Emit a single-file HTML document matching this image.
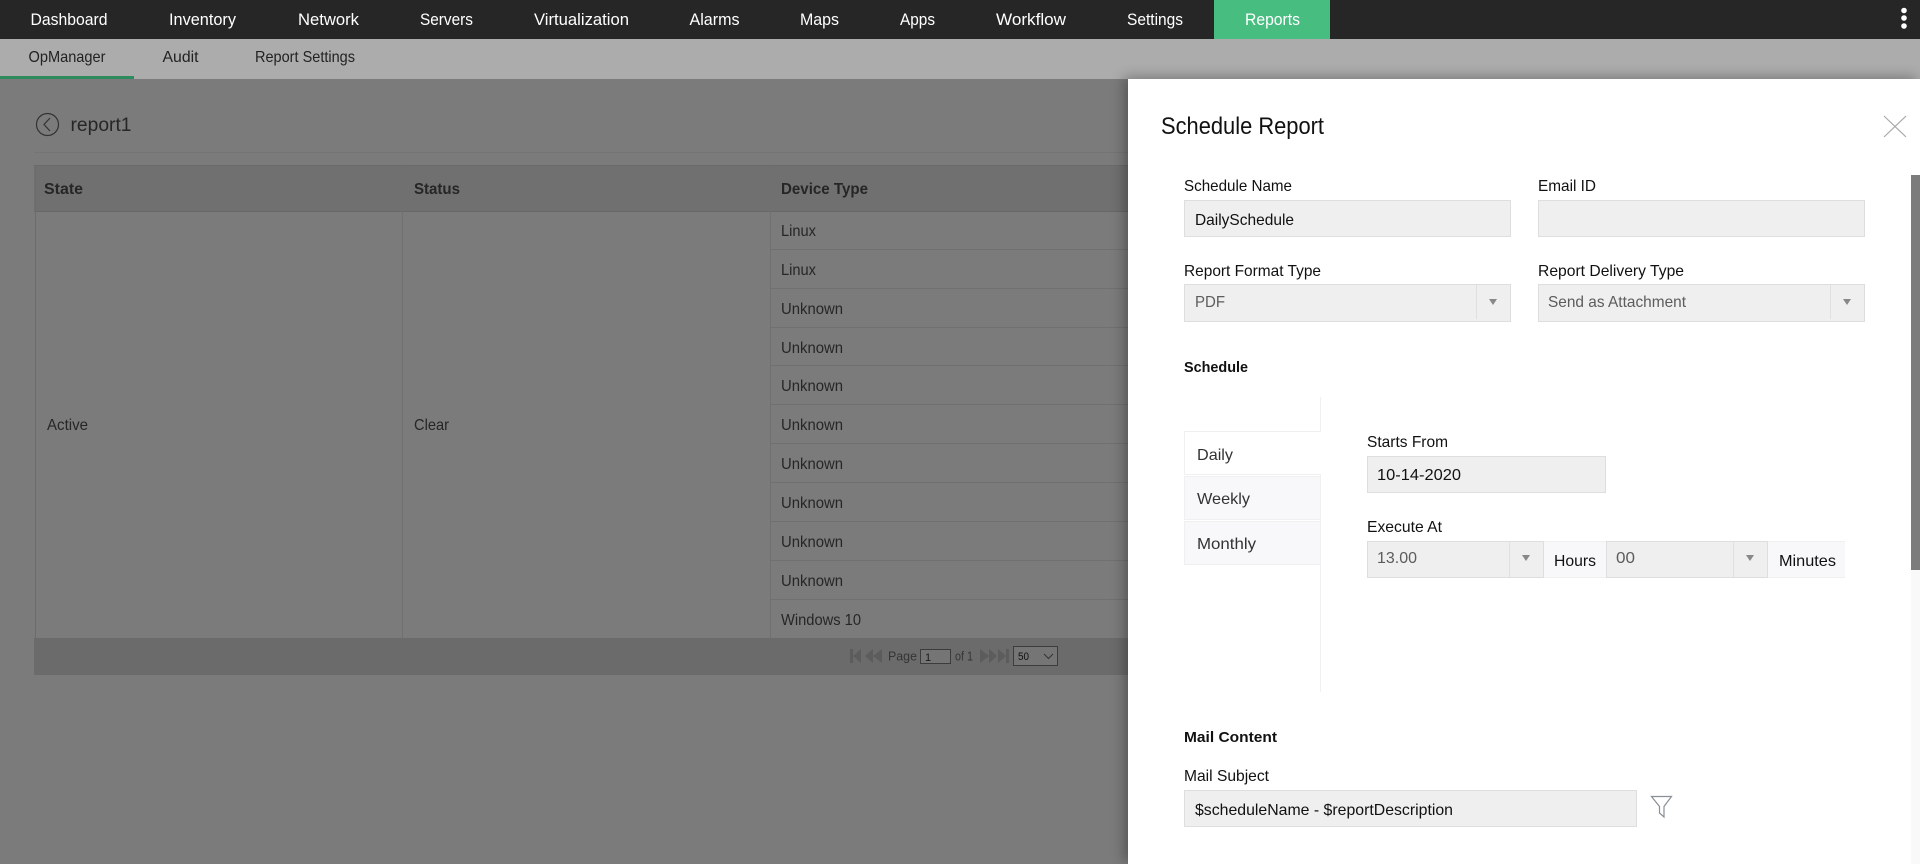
<!DOCTYPE html>
<html lang="en"><head><meta charset="utf-8"><title>Schedule Report</title>
<style>
html,body{margin:0;padding:0;width:1920px;height:864px;overflow:hidden;background:#7b7b7b;font-family:"Liberation Sans",sans-serif}
div{position:absolute;box-sizing:border-box}
.in{background:#efefef;border:1px solid #dedede}
.dv{width:1px;background:#e0e0e0}
.ln{background:#707070;height:1px}
.vl{background:#707070;width:1px}
svg{position:absolute;left:0;top:0}
text{font-family:"Liberation Sans",sans-serif;font-size:16px;fill:#111}
.n text{fill:#fff;font-size:16.5px}
.s text{fill:#222;font-size:16px}
.t text{fill:#262626;font-size:16px}
.b{font-weight:700}
.g{fill:#5c5c5c}
</style></head><body>
<div style="left:0;top:0;width:1920px;height:39px;background:#262626"></div>
<div style="left:1214px;top:0;width:116px;height:39px;background:#48bd80"></div>
<div style="left:0;top:39px;width:1920px;height:40px;background:#acacac"></div>
<div style="left:0;top:76px;width:134px;height:3px;background:#2e8b5e"></div>
<div style="left:34px;top:152px;width:1094px;height:1px;background:#747474"></div>
<div style="left:34px;top:165px;width:1094px;height:47px;background:#707070;border-top:1px solid #6a6a6a;border-bottom:1px solid #676767"></div>
<div class="vl" style="left:35px;top:165px;height:473px;background:#6c6c6c"></div>
<div class="vl" style="left:402px;top:165px;height:473px"></div>
<div class="vl" style="left:770px;top:165px;height:473px"></div>
<div class="ln" style="left:770px;top:249px;width:358px"></div>
<div class="ln" style="left:770px;top:288px;width:358px"></div>
<div class="ln" style="left:770px;top:327px;width:358px"></div>
<div class="ln" style="left:770px;top:365px;width:358px"></div>
<div class="ln" style="left:770px;top:404px;width:358px"></div>
<div class="ln" style="left:770px;top:443px;width:358px"></div>
<div class="ln" style="left:770px;top:482px;width:358px"></div>
<div class="ln" style="left:770px;top:521px;width:358px"></div>
<div class="ln" style="left:770px;top:560px;width:358px"></div>
<div class="ln" style="left:770px;top:599px;width:358px"></div>
<div style="left:34px;top:638px;width:1094px;height:37px;background:#6b6b6b"></div>
<div style="left:920px;top:649px;width:31px;height:15px;background:#757575;border:1px solid #3c3c3c"></div>
<div style="left:1013px;top:646px;width:45px;height:20px;background:#757575;border:1px solid #3c3c3c"></div>

<div style="left:1128px;top:79px;width:792px;height:785px;background:#fff;box-shadow:-4px -2px 12px rgba(0,0,0,.3)"></div>
<div style="left:1911px;top:175px;width:9px;height:689px;background:#f9f9f9"></div>
<div style="left:1911px;top:175px;width:9px;height:395px;background:#7c7c7c"></div>

<div class="in" style="left:1184px;top:200px;width:327px;height:37px"></div>
<div class="in" style="left:1538px;top:200px;width:327px;height:37px"></div>
<div class="in" style="left:1184px;top:284px;width:327px;height:38px"></div>
<div class="dv" style="left:1476px;top:285px;height:34px"></div>
<div class="in" style="left:1538px;top:284px;width:327px;height:38px"></div>
<div class="dv" style="left:1830px;top:285px;height:34px"></div>

<div style="left:1320px;top:397px;width:1px;height:295px;background:#f0f0f0"></div>
<div style="left:1184px;top:431px;width:137px;height:44px;background:#fff;border:1px solid #f0f0f0;border-right:0"></div>
<div style="left:1184px;top:476px;width:136px;height:44px;background:#f8f8fa;border:1px solid #f0f0f0;border-right:0"></div>
<div style="left:1184px;top:521px;width:136px;height:44px;background:#f8f8fa;border:1px solid #f0f0f0;border-right:0"></div>

<div class="in" style="left:1367px;top:456px;width:239px;height:37px"></div>
<div class="in" style="left:1367px;top:541px;width:177px;height:37px"></div>
<div class="dv" style="left:1509px;top:542px;height:35px"></div>
<div style="left:1544px;top:541px;width:62px;height:37px;background:#f8f8fa;border-top:1px solid #f0f0f0;border-bottom:1px solid #f0f0f0"></div>
<div class="in" style="left:1606px;top:541px;width:162px;height:37px"></div>
<div class="dv" style="left:1733px;top:542px;height:35px"></div>
<div style="left:1768px;top:541px;width:77px;height:37px;background:#f8f8fa;border-top:1px solid #f0f0f0;border-bottom:1px solid #f0f0f0"></div>
<div class="in" style="left:1184px;top:790px;width:453px;height:37px"></div>

<svg width="1920" height="864" viewBox="0 0 1920 864">
<g class="n">
<text x="30.500" y="25" textLength="77" lengthAdjust="spacingAndGlyphs">Dashboard</text>
<text x="169" y="25" textLength="67" lengthAdjust="spacingAndGlyphs">Inventory</text>
<text x="298" y="25" textLength="61" lengthAdjust="spacingAndGlyphs">Network</text>
<text x="420" y="25" textLength="53" lengthAdjust="spacingAndGlyphs">Servers</text>
<text x="534" y="25" textLength="95" lengthAdjust="spacingAndGlyphs">Virtualization</text>
<text x="689.500" y="25" textLength="50" lengthAdjust="spacingAndGlyphs">Alarms</text>
<text x="800" y="25" textLength="39" lengthAdjust="spacingAndGlyphs">Maps</text>
<text x="900" y="25" textLength="35" lengthAdjust="spacingAndGlyphs">Apps</text>
<text x="996" y="25" textLength="70" lengthAdjust="spacingAndGlyphs">Workflow</text>
<text x="1127" y="25" textLength="56" lengthAdjust="spacingAndGlyphs">Settings</text>
<text x="1245" y="25" textLength="55" lengthAdjust="spacingAndGlyphs">Reports</text>
</g>
<circle cx="1904" cy="10.500" r="2.800" fill="#fff"/><circle cx="1904" cy="18" r="2.800" fill="#fff"/><circle cx="1904" cy="26" r="2.800" fill="#fff"/>
<g class="s">
<text x="28.500" y="62" textLength="77" lengthAdjust="spacingAndGlyphs">OpManager</text>
<text x="162.500" y="62" textLength="36" lengthAdjust="spacingAndGlyphs">Audit</text>
<text x="255" y="62" textLength="100" lengthAdjust="spacingAndGlyphs">Report Settings</text>
</g>
<circle cx="47.500" cy="124.500" r="11" fill="none" stroke="#333" stroke-width="1.200"/>
<path d="M50 118 L44 124.500 L50 131" fill="none" stroke="#333" stroke-width="1.200"/>
<g class="t">
<text x="70.500" y="131" textLength="61" lengthAdjust="spacingAndGlyphs" style="font-size:19px">report1</text>
<text class="b" x="44" y="194" textLength="39" lengthAdjust="spacingAndGlyphs">State</text>
<text class="b" x="414" y="194" textLength="46" lengthAdjust="spacingAndGlyphs">Status</text>
<text class="b" x="781" y="194" textLength="87" lengthAdjust="spacingAndGlyphs">Device Type</text>
<text x="47" y="430" textLength="41" lengthAdjust="spacingAndGlyphs">Active</text>
<text x="414" y="430" textLength="35" lengthAdjust="spacingAndGlyphs">Clear</text>
<text x="781" y="236" textLength="35" lengthAdjust="spacingAndGlyphs">Linux</text>
<text x="781" y="275" textLength="35" lengthAdjust="spacingAndGlyphs">Linux</text>
<text x="781" y="314" textLength="62" lengthAdjust="spacingAndGlyphs">Unknown</text>
<text x="781" y="353" textLength="62" lengthAdjust="spacingAndGlyphs">Unknown</text>
<text x="781" y="391" textLength="62" lengthAdjust="spacingAndGlyphs">Unknown</text>
<text x="781" y="430" textLength="62" lengthAdjust="spacingAndGlyphs">Unknown</text>
<text x="781" y="469" textLength="62" lengthAdjust="spacingAndGlyphs">Unknown</text>
<text x="781" y="508" textLength="62" lengthAdjust="spacingAndGlyphs">Unknown</text>
<text x="781" y="547" textLength="62" lengthAdjust="spacingAndGlyphs">Unknown</text>
<text x="781" y="586" textLength="62" lengthAdjust="spacingAndGlyphs">Unknown</text>
<text x="781" y="625" textLength="80" lengthAdjust="spacingAndGlyphs">Windows 10</text>
</g>
<g fill="#5c5c5c">
<path d="M850 649h3v14h-3zM861 649v14l-8-7z"/>
<path d="M873 649v14l-8-7zM882 649v14l-9-7z"/>
<path d="M980 649v14l9-7zM989 649v14l8-7z"/>
<path d="M998 649v14l8-7zM1006 649h3v14h-3z"/>
</g>
<text x="888" y="660.500" textLength="29" lengthAdjust="spacingAndGlyphs" style="font-size:12.500px;fill:#353535">Page</text>
<text x="925" y="661" style="font-size:11px;fill:#1a1a1a">1</text>
<text x="955" y="660.500" textLength="18" lengthAdjust="spacingAndGlyphs" style="font-size:12.500px;fill:#353535">of 1</text>
<text x="1018" y="660" textLength="11" lengthAdjust="spacingAndGlyphs" style="font-size:11px;fill:#111">50</text>
<path d="M1044 654l4.500 4.500 4.500-4.500" fill="none" stroke="#333" stroke-width="1"/>

<text x="1161" y="134" textLength="163" lengthAdjust="spacingAndGlyphs" style="font-size:24px;fill:#111">Schedule Report</text>
<path d="M1884 116L1906 137M1906 116L1884 137" stroke="#aaa" stroke-width="1.200" fill="none"/>
<text x="1184" y="191" textLength="108" lengthAdjust="spacingAndGlyphs">Schedule Name</text>
<text x="1538" y="191" textLength="58" lengthAdjust="spacingAndGlyphs">Email ID</text>
<text x="1195" y="225" textLength="99" lengthAdjust="spacingAndGlyphs">DailySchedule</text>
<text x="1184" y="276" textLength="137" lengthAdjust="spacingAndGlyphs">Report Format Type</text>
<text x="1538" y="276" textLength="146" lengthAdjust="spacingAndGlyphs">Report Delivery Type</text>
<text class="g" x="1195" y="307" textLength="30" lengthAdjust="spacingAndGlyphs">PDF</text>
<text class="g" x="1548" y="307" textLength="138" lengthAdjust="spacingAndGlyphs">Send as Attachment</text>
<path d="M1489 299h8l-4 6zM1843 299h8l-4 6z" fill="#888"/>
<text class="b" x="1184" y="372" textLength="64" lengthAdjust="spacingAndGlyphs" style="font-size:15px">Schedule</text>
<text x="1197" y="460" textLength="36" lengthAdjust="spacingAndGlyphs" style="fill:#333">Daily</text>
<text x="1197" y="504" textLength="53" lengthAdjust="spacingAndGlyphs" style="fill:#333">Weekly</text>
<text x="1197" y="549" textLength="59" lengthAdjust="spacingAndGlyphs" style="fill:#333">Monthly</text>
<text x="1367" y="447" textLength="81" lengthAdjust="spacingAndGlyphs">Starts From</text>
<text x="1377" y="480" textLength="84" lengthAdjust="spacingAndGlyphs">10-14-2020</text>
<text x="1367" y="532" textLength="75" lengthAdjust="spacingAndGlyphs">Execute At</text>
<text class="g" x="1377" y="563" textLength="40" lengthAdjust="spacingAndGlyphs">13.00</text>
<path d="M1522 555h8l-4 6zM1746 555h8l-4 6z" fill="#888"/>
<text x="1554" y="566" textLength="42" lengthAdjust="spacingAndGlyphs">Hours</text>
<text class="g" x="1616" y="563" textLength="19" lengthAdjust="spacingAndGlyphs">00</text>
<text x="1779" y="566" textLength="57" lengthAdjust="spacingAndGlyphs">Minutes</text>
<text class="b" x="1184" y="742" textLength="93" lengthAdjust="spacingAndGlyphs" style="font-size:15px">Mail Content</text>
<text x="1184" y="781" textLength="85" lengthAdjust="spacingAndGlyphs">Mail Subject</text>
<text x="1195" y="815" textLength="258" lengthAdjust="spacingAndGlyphs">$scheduleName - $reportDescription</text>
<path d="M1651.500 796.500H1671.500L1664 806.500V817L1659.500 813V806.500Z" fill="#fff" stroke="#8a8f96" stroke-width="1.200"/>
</svg>
</body></html>
